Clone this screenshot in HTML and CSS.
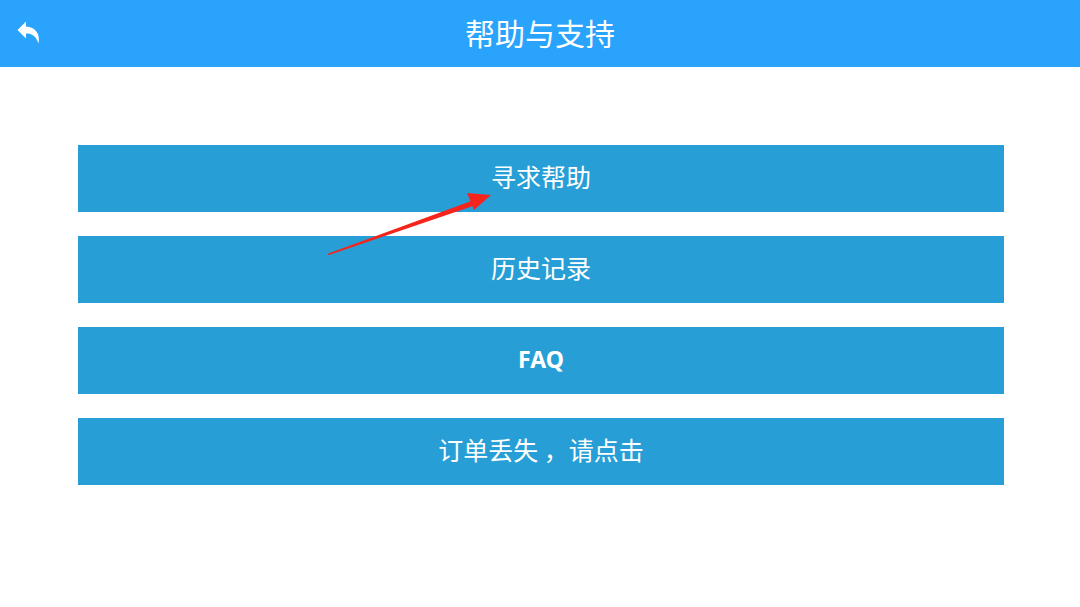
FILE: index.html
```html
<!DOCTYPE html>
<html lang="zh">
<head>
<meta charset="utf-8">
<title>帮助与支持</title>
<link rel="stylesheet" href="styles.css">
</head>
<body>
<header class="topbar">
  <button class="back" aria-label="返回">
    <svg viewBox="0 0 26 26" width="26" height="26"><path d="M10 2.5 L1.5 11 L10 19.5 V14.5 C16 14.5 20 17 22.5 24.5 C24.5 15 19.5 8 10 7.5 Z" fill="#fff"/></svg>
  </button>
  <h1 class="title">帮助与支持</h1>
</header>
<main class="menu">
  <div class="item">寻求帮助</div>
  <div class="item">历史记录</div>
  <div class="item latin">FAQ</div>
  <div class="item">订单丢失 ，请点击</div>
  <svg class="pointer" viewBox="0 0 1080 607" width="1080" height="607">
    <polygon points="327,254 474,200 476,205 329,255" fill="#f5241c"/>
    <polygon points="491,195 467,193 474,210" fill="#f5241c"/>
  </svg>
</main>
</body>
</html>
```
FILE: styles.css
```css
html, body {
  margin: 0;
  padding: 0;
  background: #ffffff;
  width: 1080px;
  height: 607px;
  overflow: hidden;
  font-family: "Noto Sans CJK SC", "Noto Sans", sans-serif;
}
.topbar {
  height: 67px;
  background: #2aa3fc;
  display: flex;
  align-items: center;
  justify-content: center;
  position: relative;
}
.back {
  position: absolute;
  left: 16px;
  top: 19px;
  width: 28px;
  height: 28px;
  padding: 0;
  border: 0;
  background: transparent;
  display: flex;
}
.title {
  margin: 0;
  padding-bottom: 4px;
  color: #ffffff;
  font-size: 30px;
  font-weight: 400;
  line-height: 1;
}
.menu {
  padding: 78px 76px 0 78px;
  display: flex;
  flex-direction: column;
  gap: 24px;
}
.item {
  height: 67px;
  box-sizing: border-box;
  padding-bottom: 4px;
  background: #279fd6;
  color: #ffffff;
  font-size: 25px;
  display: flex;
  align-items: center;
  justify-content: center;
  line-height: 1;
}
.item.latin {
  font-family: "Noto Sans", "Roboto", sans-serif;
  font-weight: 700;
  font-size: 23px;
  padding-bottom: 2px;
}
.pointer {
  position: absolute;
  left: 0;
  top: 0;
  pointer-events: none;
}
```
